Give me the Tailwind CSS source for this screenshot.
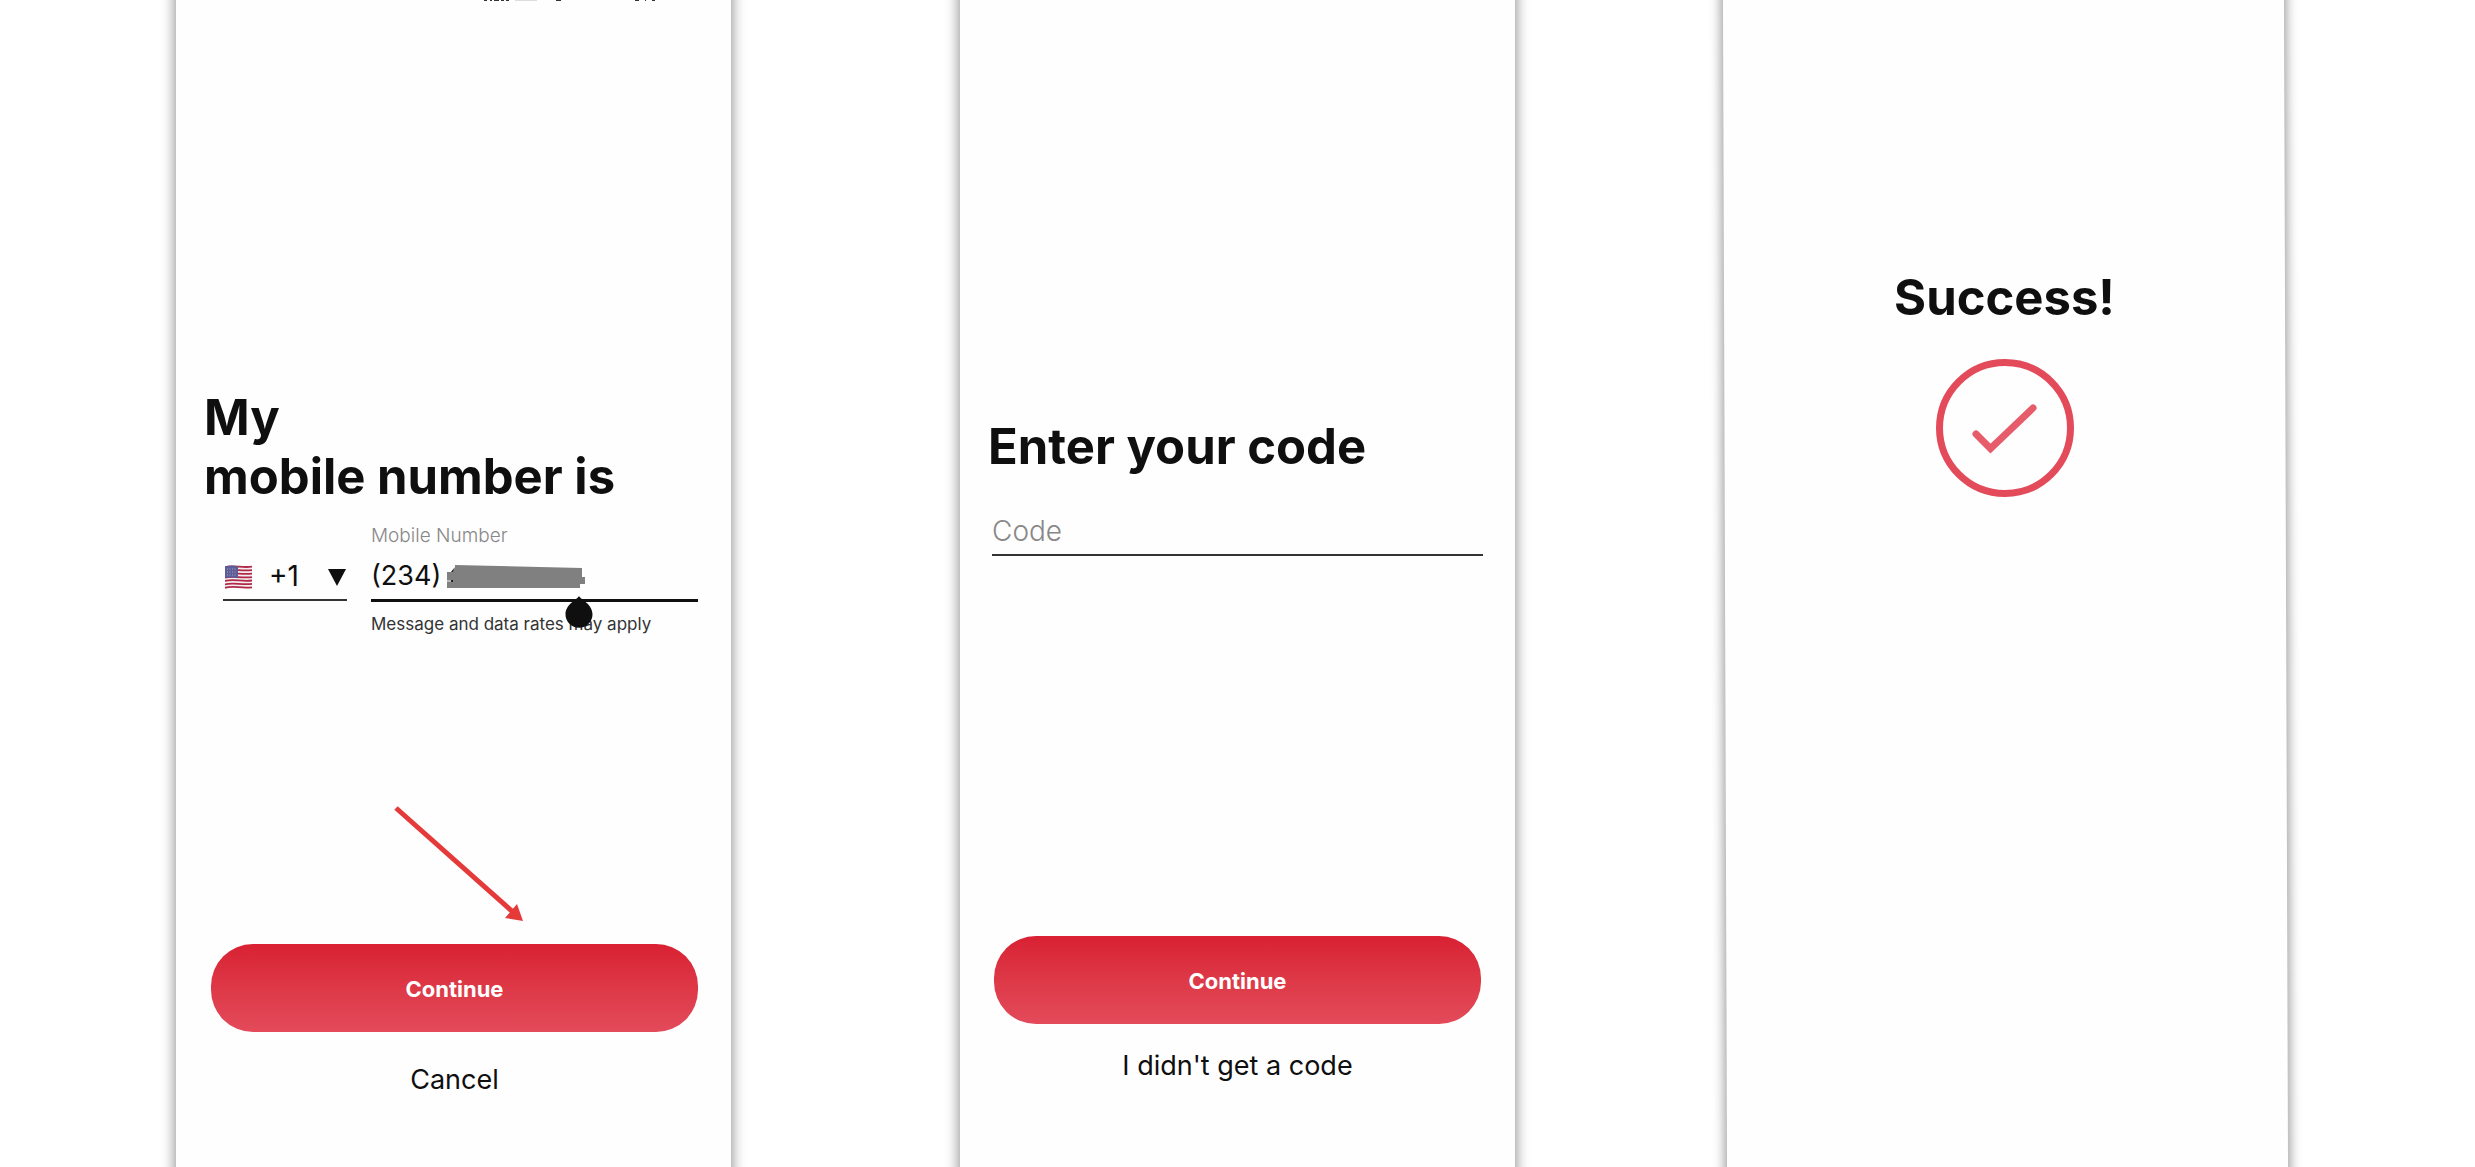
<!DOCTYPE html>
<html lang="en">
<head>
<meta charset="utf-8">
<title>Phone verification</title>
<script src="https://cdn.jsdelivr.net/npm/@tailwindcss/browser@4"></script>
</head>
<body class="bg-white font-['Inter',sans-serif] text-[#0f0f0f]">
<main class="grid min-h-screen grid-cols-[176fr_555fr_229fr_555fr_210fr_561fr_189fr] overflow-hidden">

  <!-- Step 1: mobile number -->
  <section class="relative isolate col-start-2 flex flex-col pb-16 before:absolute before:inset-x-0 before:-inset-y-5 before:-z-10 before:bg-[#fefefe] before:shadow-[0_0_12px_2px_rgba(0,0,0,0.4)]">
    <svg class="absolute top-0 left-[308px] h-1 w-[172px]" viewBox="0 0 172 4" aria-hidden="true">
      <path d="M0 0h3M6 0h2M10 0h5M17 0h3M22 0h3" stroke="#333" stroke-width="2"/>
      <path d="M31 0h22" stroke="#ddd" stroke-width="2"/>
      <path d="M72 0h5M151 0h4M161 0h1M168 0h3" stroke="#333" stroke-width="2"/>
    </svg>
    <h1 class="pt-[388px] pl-7 text-[49px] leading-[59px] font-bold">My<br>mobile number is</h1>
    <form class="flex flex-col pr-[33px] pl-[35px]">
      <div class="flex gap-6 pt-4 pl-3">
        <div class="relative mt-[30px] h-[49px] w-[124px] border-b-2 border-[#333]">
          <select aria-label="Country code" class="h-full w-full appearance-none bg-transparent pl-[46px] text-[28px] leading-8 outline-none">
            <option>+1</option>
          </select>
          <svg class="pointer-events-none absolute top-[13px] left-[2px] h-6 w-[27px]" viewBox="0 0 27 24" aria-hidden="true">
            <path d="M0 1.500C7-1 16 2.500 27 1v22c-10 1.500-18-2-27 .5z" fill="#f5eef0"/>
            <g fill="none" stroke="#b02a48" stroke-width="1.800">
              <path d="M0 2.200C8-.2 16 3 27 1.700M0 5.600C8 3.200 16 6.400 27 5.100M0 9.100C8 6.700 16 9.900 27 8.600M0 12.600C8 10.200 16 13.400 27 12.100M0 16C8 13.600 16 16.800 27 15.500M0 19.400C8 17 16 20.200 27 18.900M0 22.800C8 20.400 16 23.600 27 22.300"/>
            </g>
            <path d="M0 1.200C5-.2 9 .5 13 1.300v12C9 12.500 5 12 0 13z" fill="#5d5c96"/>
            <path d="M2 4h10M2 7h10M2 10h10" stroke="#a9a9cc" stroke-width="1" stroke-dasharray="1 1.500"/>
          </svg>
          <svg class="pointer-events-none absolute top-[17px] left-[105px] h-[17px] w-[18px]" viewBox="0 0 18 17" aria-hidden="true"><path d="M0 0h18L9 17z" fill="#0f0f0f"/></svg>
        </div>
        <div class="relative flex-1">
          <label for="phone" class="block h-[30px] text-[19px] leading-7 font-light text-[#888]">Mobile Number</label>
          <input id="phone" type="tel" value="(234)" class="block h-[50px] w-full border-b-3 border-[#0f0f0f] bg-transparent text-[27px] leading-8 outline-none">
          <svg class="absolute top-[43px] left-[76px] h-[23px] w-[138px]" viewBox="0 0 138 23" aria-hidden="true">
            <path d="M8 0L135 3v9h3v7h-5v4H0V7h5l3-5z" fill="#808080"/>
            <path d="M7 3L4 7h2zM4 15h2v2H4z" fill="#222"/><path d="M0 16h4" stroke="#eee" stroke-width="1"/>
          </svg>
          <p class="pt-[10px] text-[17px] leading-6 text-[#333]">Message and data rates may apply</p>
          <svg class="absolute top-[74px] left-[194px] h-8 w-7" viewBox="0 0 28 32" aria-hidden="true"><path d="M14 0c2 4 13.500 8 13.500 18.300a13.500 13.500 0 0 1-27 0C.5 8 12 4 14 0z" fill="#0f0f0f"/></svg>
        </div>
      </div>
      <svg class="mt-[170px] ml-[183px] h-[116px] w-[130px]" viewBox="0 0 130 116" aria-hidden="true">
        <path d="M2 2L119 106" stroke="#e53a3a" stroke-width="5"/><path d="M129 115l-18-3 12-14z" fill="#e53a3a"/>
      </svg>
      <button type="button" class="mt-[22px] h-[88px] rounded-[42px] bg-linear-to-b from-[#d82032] to-[#e34a5a] pt-[2px] text-[22px] leading-7 font-bold text-white">Continue</button>
      <button type="button" class="mt-7 h-10 text-[27px] leading-10">Cancel</button>
    </form>
  </section>

  <!-- Step 2: verification code -->
  <section class="relative isolate col-start-4 flex flex-col pb-16 before:absolute before:inset-x-0 before:-inset-y-5 before:-z-10 before:bg-[#fefefe] before:shadow-[0_0_12px_2px_rgba(0,0,0,0.4)]">
    <h1 class="pt-[417px] pl-7 text-[49px] leading-[59px] font-bold">Enter your code</h1>
    <form class="flex flex-col px-8">
      <input aria-label="Code" type="text" placeholder="Code" class="mt-8 h-12 w-full border-b-2 border-[#333] bg-transparent text-[28px] leading-8 font-light outline-none placeholder:text-[#888]">
      <button type="button" class="mx-[2px] mt-[380px] h-[88px] rounded-[42px] bg-linear-to-b from-[#d82032] to-[#e34a5a] pt-[2px] text-[22px] leading-7 font-bold text-white">Continue</button>
      <button type="button" class="mt-[22px] h-10 text-[27px] leading-10">I didn't get a code</button>
    </form>
  </section>

  <!-- Step 3: confirmation -->
  <section class="relative isolate col-start-6 flex flex-col items-center pr-[2px] before:absolute before:inset-x-0 before:-inset-y-5 before:-z-10 before:skew-x-[0.2deg] before:bg-[#fefefe] before:shadow-[0_0_12px_2px_rgba(0,0,0,0.4)]">
    <h1 class="pt-[268px] text-[49px] leading-[59px] font-bold">Success!</h1>
    <svg class="mt-8 h-[138px] w-[138px]" viewBox="0 0 138 138" role="img" aria-label="Verified">
      <circle cx="69" cy="69" r="65.500" fill="none" stroke="#e34a5a" stroke-width="7"/>
      <path d="M40 75L54.500 89.500L97 49" fill="none" stroke="#e65c6a" stroke-width="7" stroke-linecap="round" stroke-linejoin="miter"/>
    </svg>
  </section>
</main>
</body>
</html>
